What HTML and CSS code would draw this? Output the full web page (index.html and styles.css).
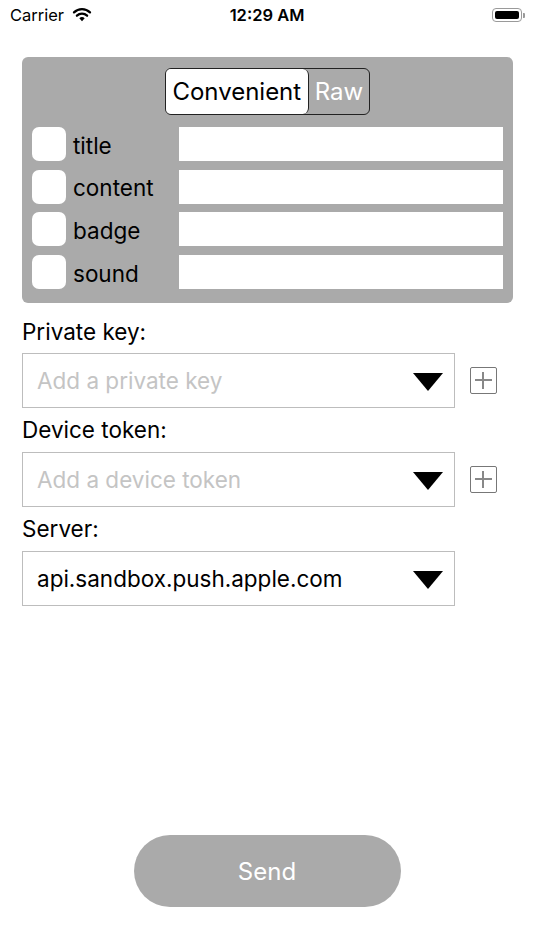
FILE: index.html
```html
<!DOCTYPE html>
<html>
<head>
<meta charset="utf-8">
<link rel="stylesheet" href="styles.css">
</head>
<body>
<div class="status">
  <div class="status-left">
    <span class="carrier">Carrier</span>
    <svg class="wifi" width="20" height="15" viewBox="0 0 20 15">
      <path d="M10 14.2 L7.3 11.3 A4 4 0 0 1 12.7 11.3 Z" fill="#000"/>
      <path d="M4.9 8.7 A7.5 7.5 0 0 1 15.1 8.7" stroke="#000" stroke-width="2.3" fill="none" stroke-linecap="round"/>
      <path d="M2 5.4 A11.6 11.6 0 0 1 18 5.4" stroke="#000" stroke-width="2.3" fill="none" stroke-linecap="round"/>
    </svg>
  </div>
  <div class="time">12:29 AM</div>
  <div class="status-right">
    <div class="battery"><div class="battery-fill"></div></div>
    <div class="battery-nub"></div>
  </div>
</div>

<main class="content">
  <section class="panel">
    <div class="segmented">
      <div class="seg seg-active">Convenient</div>
      <div class="seg">Raw</div>
    </div>
    <div class="row"><div class="check"></div><span class="row-label">title</span><div class="field"></div></div>
    <div class="row"><div class="check"></div><span class="row-label">content</span><div class="field"></div></div>
    <div class="row"><div class="check"></div><span class="row-label">badge</span><div class="field"></div></div>
    <div class="row"><div class="check"></div><span class="row-label">sound</span><div class="field"></div></div>
  </section>

  <div class="label first">Private key:</div>
  <div class="select-row">
    <div class="select"><span class="placeholder">Add a private key</span><span class="tri"></span></div>
    <div class="plus"></div>
  </div>

  <div class="label">Device token:</div>
  <div class="select-row">
    <div class="select"><span class="placeholder">Add a device token</span><span class="tri"></span></div>
    <div class="plus"></div>
  </div>

  <div class="label">Server:</div>
  <div class="select-row">
    <div class="select"><span class="value">api.sandbox.push.apple.com</span><span class="tri"></span></div>
  </div>

  <div class="send-wrap"><button class="send">Send</button></div>
</main>
</body>
</html>
```
FILE: styles.css
```css
* { box-sizing: border-box; }
html, body { margin: 0; padding: 0; background: #fff; }
body {
  width: 534px;
  height: 950px;
  font-family: Inter, "Liberation Sans", Arial, sans-serif;
  color: #000;
}
.status {
  height: 30px;
  display: flex;
  align-items: center;
  justify-content: space-between;
  padding: 0 9px 0 10px;
  position: relative;
}
.status-left { display: flex; align-items: center; gap: 8px; }
.carrier { font-size: 16.5px; }
.wifi { margin-top: -1px; }
.time {
  position: absolute;
  left: 0; right: 0; top: 0;
  text-align: center;
  line-height: 30px;
  font-size: 16.5px;
  font-weight: 600;
  pointer-events: none;
}
.status-right { display: flex; align-items: center; }
.battery {
  width: 30px; height: 14px;
  border: 1px solid #9a9a9a;
  border-radius: 4px;
  padding: 2px;
}
.battery-fill { width: 100%; height: 100%; background: #000; border-radius: 2px; }
.battery-nub { width: 2px; height: 5px; background: #9a9a9a; border-radius: 0 1px 1px 0; margin-left: 1px; }

.content { padding: 27px 22px 0 22px; }

.panel {
  width: 491px;
  background: #aaaaaa;
  border-radius: 6px;
  padding: 11px 10px 14px 10px;
  display: flex;
  flex-direction: column;
  gap: 8.7px;
}
.segmented {
  align-self: center;
  display: flex;
  height: 47px;
  border: 1px solid #222;
  border-radius: 6px;
  margin-bottom: 3.4px;
  overflow: hidden;
}
.seg {
  font-size: 24px;
  line-height: 45px;
  padding: 0 6px 0 6px;
  color: #fff;
}
.seg-active {
  background: #fff;
  color: #000;
  border-right: 1px solid #222;
  border-radius: 0 6px 6px 0;
  width: 143px;
  padding: 0;
  text-align: center;
}
.row { display: flex; align-items: center; height: 34px; }
.check {
  width: 34px; height: 34px;
  background: #fff;
  border-radius: 7px;
  flex: none;
}
.row-label {
  font-size: 22.5px;
  margin-left: 7px;
  width: 106px;
  padding-top: 2px;
}
.field {
  width: 324px;
  height: 34px;
  background: #fff;
}

.label {
  font-size: 22.5px;
  line-height: 26px;
  margin-top: 9px;
  margin-bottom: 9px;
}
.label.first { margin-top: 16px; margin-bottom: 8px; }
.select-row { display: flex; align-items: center; }
.select {
  width: 433px;
  height: 55px;
  border: 1px solid #bdbdbd;
  display: flex;
  align-items: center;
  justify-content: space-between;
  padding: 0 11px 0 14px;
}
.placeholder { font-size: 22.5px; color: #c4c4c4; }
.value { font-size: 22.5px; color: #000; }
.tri {
  width: 0; height: 0;
  border-left: 15px solid transparent;
  border-right: 15px solid transparent;
  border-top: 18px solid #000;
  margin-top: 2px;
}
.plus {
  width: 27px; height: 27px;
  margin-left: 15px;
  border: 1.5px solid #777;
  border-radius: 2px;
  position: relative;
}
.plus::before, .plus::after {
  content: "";
  position: absolute;
  background: #888;
}
.plus::before { left: 4px; right: 4px; top: 11px; height: 1.5px; }
.plus::after { top: 4px; bottom: 4px; left: 11px; width: 1.5px; }

.send-wrap { display: flex; justify-content: center; margin-top: 229px; }
.send {
  width: 267px;
  height: 72px;
  border: none;
  border-radius: 36px;
  background: #aaaaaa;
  color: #fff;
  font-family: Inter, "Liberation Sans", Arial, sans-serif;
  font-size: 24px;
}
```
